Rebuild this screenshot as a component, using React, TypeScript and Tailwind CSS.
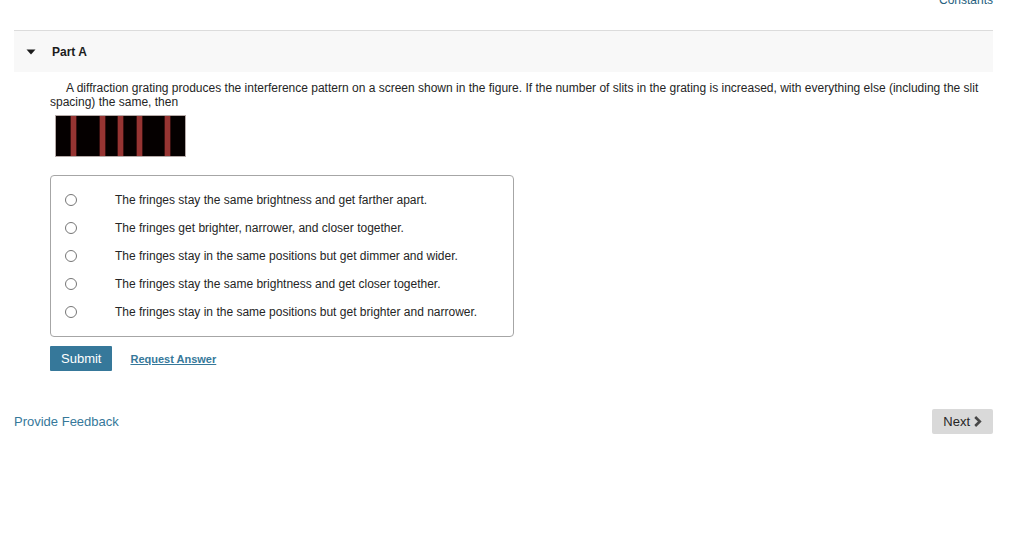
const options = [
  'The fringes stay the same brightness and get farther apart.',
  'The fringes get brighter, narrower, and closer together.',
  'The fringes stay in the same positions but get dimmer and wider.',
  'The fringes stay the same brightness and get closer together.',
  'The fringes stay in the same positions but get brighter and narrower.',
]

// centre of each bright fringe, in px from the left edge of the figure
const fringes = [18, 47, 65, 84, 112]

function DiffractionFigure() {
  return (
    <svg
      width="131"
      height="42"
      viewBox="0 0 131 42"
      role="img"
      aria-label="Interference pattern"
      className="mt-[6px] ml-[5px] block"
    >
      <rect width="131" height="42" fill="#b5aaa8" />
      <rect x="1" y="1" width="129" height="40" fill="#050000" />
      {fringes.map((x) => (
        <g key={x}>
          <rect x={x - 3} y="1" width="7" height="40" fill="#3a1010" />
          <rect x={x - 2} y="1" width="5" height="40" fill="#963432" />
        </g>
      ))}
    </svg>
  )
}

function AnswerChoices() {
  return (
    <fieldset
      aria-label="Answer choices"
      className="mt-[18px] w-fit rounded border border-[#a6a6a6] py-[10px] pr-9 pl-[14px]"
    >
      {options.map((option, i) => (
        <label key={option} className="flex h-7 items-center gap-[38px]">
          <input
            type="radio"
            name="answer"
            value={i}
            className="size-3 shrink-0 appearance-none rounded-full border border-[#767676] bg-white checked:border-4 checked:border-[#36789a]"
          />
          <span>{option}</span>
        </label>
      ))}
    </fieldset>
  )
}

export default function App() {
  return (
    <div className="overflow-hidden bg-white pr-[31px] pl-[14px] font-['Liberation_Sans',Arial,sans-serif] text-xs leading-[14px] text-[#252525]">
      <div className="-mt-2 flex h-[38px] justify-end">
        <a href="#constants" className="h-4 leading-4 text-[#27617e]">
          Constants
        </a>
      </div>

      <section>
        <header className="border-t border-[#dcdcdc] bg-[#f8f8f8]">
          <button type="button" aria-expanded="true" className="flex h-[41px] w-full items-center gap-4 pl-3 text-left">
            <svg width="10" height="6" viewBox="0 0 10 6" aria-hidden="true">
              <path d="M.5 .5h9L5 5.5z" fill="#1c1c1c" />
            </svg>
            <h2 className="font-bold text-[#1c1c1c]">Part A</h2>
          </button>
        </header>

        <div className="pt-[9px] pl-9">
          <p className="indent-4">
            A diffraction grating produces the interference pattern on a screen shown in the figure. If the number of
            slits in the grating is increased, with everything else (including the slit spacing) the same, then
          </p>
          <DiffractionFigure />
          <form onSubmit={(e) => e.preventDefault()}>
            <AnswerChoices />
            <div className="mt-[9px] flex items-center gap-[18px]">
              <button type="submit" className="h-[25px] rounded-[1px] bg-[#36789a] px-[11px] text-[13px] text-white">
                Submit
              </button>
              <a href="#answer" className="text-[11px] font-bold text-[#36789a] underline">
                Request Answer
              </a>
            </div>
          </form>
        </div>
      </section>

      <footer className="mt-[38px] flex items-center justify-between text-[13px]">
        <a href="#feedback" className="text-[#36789a]">
          Provide Feedback
        </a>
        <button type="button" className="flex h-[25px] items-center gap-1 rounded-xs bg-[#d9d9d9] px-[11px]">
          Next
          <svg width="8" height="11" viewBox="0 0 8 11" aria-hidden="true">
            <path d="M1.2 1 5.8 5.5 1.2 10" fill="none" stroke="#484848" strokeWidth="2.6" />
          </svg>
        </button>
      </footer>
    </div>
  )
}
